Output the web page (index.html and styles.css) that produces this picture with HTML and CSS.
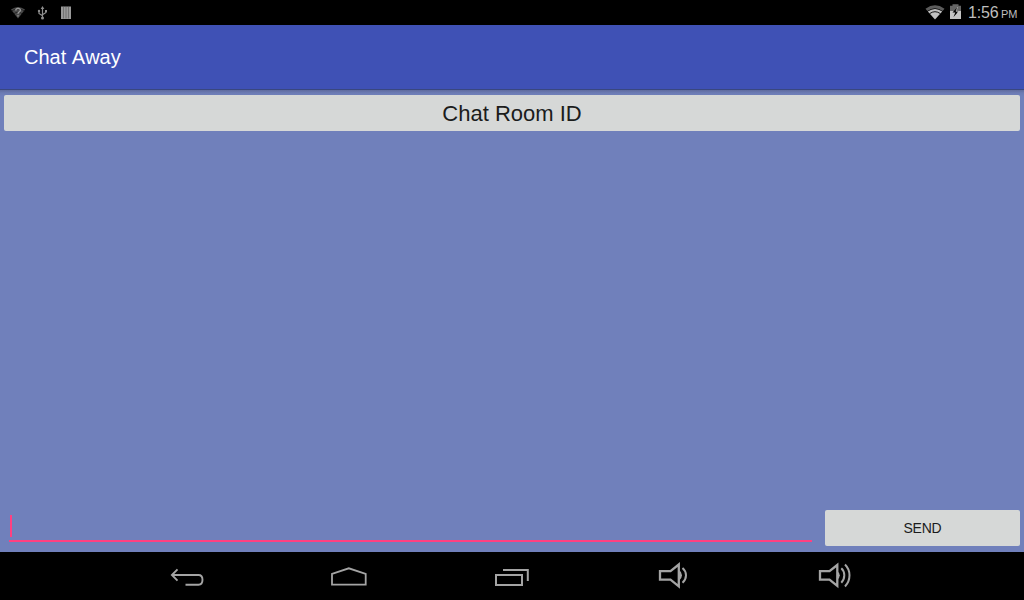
FILE: index.html
```html
<!DOCTYPE html>
<html lang="en">
<head>
<meta charset="utf-8">
<title>Chat Away</title>
<link rel="stylesheet" href="styles.css">
</head>
<body>
<div class="screen">
  <header class="status">
    <div class="notices">
      <svg width="90" height="25" viewBox="0 0 90 25">
        <path d="M11 9.500Q18 4.500 25 9.500L18 18.500Z" fill="#4b4b4b"/>
        <path d="M11.500 11Q18 6.500 24.500 11M13.500 14Q18 10.500 22.500 14" fill="none" stroke="#111" stroke-width=".6"/>
        <path d="M15.800 10.500Q15.800 8.400 18 8.400Q20.400 8.400 20.400 10.300Q20.400 11.300 19 12.200Q18 12.800 18 13.800M18 15.200V16.600" fill="none" stroke="#999" stroke-width="1.400"/>
        <path d="M42.500 8V18M39 11V13.500L42.500 15.800M46 11V12.500L42.500 14.800" fill="none" stroke="#8e8e8e" stroke-width="1.200"/>
        <path d="M42.500 6L44.300 9H40.700Z" fill="#8e8e8e"/>
        <path d="M45 10h2v2h-2z" fill="#8e8e8e"/>
        <circle cx="39" cy="11" r="1.200" fill="#8e8e8e"/>
        <circle cx="42.500" cy="18" r="1.500" fill="#8e8e8e"/>
        <path d="M61 6.500H71V19H61Z" fill="#999"/>
        <path d="M63.500 7V18.500M66 7V18.500M68.500 7V18.500" stroke="#686868" stroke-width=".8"/>
      </svg>
    </div>
    <div class="system">
      <svg width="40" height="25" viewBox="925 0 40 25">
        <path d="M925.500 8.700Q935 1.800 944.500 8.700L942.600 11Q935 5.600 927.400 11Z" fill="#5c5c5c"/>
        <path d="M927.800 11.500Q935 6.400 942.200 11.500L935 19.500Z" fill="#c0c0c0"/>
        <path d="M929.500 13.700Q935 9.700 940.500 13.700" fill="none" stroke="#000" stroke-width=".9"/>
        <path d="M950 5.800H952.500V4.200H958.500V5.800H961V12H950Z" fill="#656565"/>
        <path d="M950 11H961V19H950Z" fill="#c4c4c4"/>
        <path d="M957.600 7L952.500 12.500H955.300L953.500 17L958.800 11.300H956Z" fill="#000"/>
        <path d="M957.600 7L956 11.300H958.800L957 13.300" fill="none" stroke="#eee" stroke-width=".5"/>
      </svg>
      <span class="clock">1:56</span><span class="meridiem">PM</span>
    </div>
  </header>
  <div class="appbar">Chat Away</div>
  <main class="content">
    <button class="btn room">Chat Room ID</button>
    <div class="messages"></div>
    <div class="composer">
      <div class="field"><span class="caret"></span></div>
      <button class="btn send">SEND</button>
    </div>
  </main>
  <nav class="navbar">
    <svg width="60" height="40" viewBox="0 0 60 40"><path d="M12 19H38.500Q42.500 19 42.500 23.800Q42.500 28.700 38.500 28.700H25.500M17.500 13.300L11.900 19L17.500 24.700" stroke-width="1.900"/></svg>
    <svg class="home" width="60" height="40" viewBox="0 0 60 40"><path d="M12 28.700V17.800L28.800 12.300L45.700 17.800V28.700Z" stroke-width="1.800"/></svg>
    <svg width="60" height="40" viewBox="0 0 60 40"><path d="M11 19H37V29H11ZM18 14H42.800V25" stroke-width="2"/></svg>
    <svg width="60" height="40" viewBox="0 0 60 40"><path d="M15 15.200H25.500L33.800 8.500V30.300L25.500 23.700H15Z" stroke-width="2.300"/><path d="M34 14Q37 16 37 19.300Q37 22.600 34 24.800Z" class="solid"/><path d="M37.500 12Q41 15 41 19.300Q41 23.600 37.500 26.800" stroke-width="2"/></svg>
    <svg width="60" height="40" viewBox="0 0 60 40"><path d="M15 15.200H24.500L32.300 9V29.800L24.500 23.700H15Z" stroke-width="2.300"/><path d="M32 15Q34.800 16.700 34.800 19.300Q34.800 22 32 24Z" class="solid"/><path d="M36.300 12.300Q39.300 15 39.300 19.300Q39.300 23.600 36.300 26.700M40 8.500Q44.500 13 44.500 19.300Q44.500 25.700 40 30.500" stroke-width="2"/></svg>
  </nav>
</div>
</body>
</html>
```
FILE: styles.css
```css
* { box-sizing: border-box; }
body { margin: 0; font-family: "Liberation Sans", Arial, sans-serif; }
svg { display: block; }
.screen { width: 1024px; height: 600px; display: flex; flex-direction: column; overflow: hidden; background: #7080bb; }
.status { height: 25px; flex: none; background: #000; display: flex; justify-content: space-between; }
.system { display: flex; align-items: baseline; width: 99px; color: #bebebe; line-height: 26px; white-space: nowrap; }
.system svg { align-self: flex-start; flex: none; }
.clock { font-size: 16px; width: 31px; margin: 0 2px 0 3px; letter-spacing: -.2px; }
.meridiem { font-size: 11px; }
.appbar { height: 64px; flex: none; background: #3f51b5; color: #fff; font-size: 20px; line-height: 64px; padding-left: 24px; font-kerning: none; }
.content { flex: 1; display: flex; flex-direction: column; padding: 6px 4px; background: linear-gradient(#39477f 0, #39477f 1px, #5f6b9e 1px, #6c7bb4 4px, #7080bb 7px); }
.btn { font-family: inherit; border: 0; padding: 0; border-radius: 2px; background: #d6d8d7; color: #1b1c1c; height: 36px; display: block; }
.room { font-size: 22px; line-height: 36px; padding-top: 1px; }
.messages { flex: 1; }
.composer { display: flex; height: 36px; gap: 13px; }
.field { flex: 1; margin: 5px 0 4px 5px; border-bottom: 2px solid #ff4081; }
.caret { display: block; width: 2px; height: 22px; margin-left: 1px; background: #ff4081; }
.send { width: 195px; font-size: 14px; line-height: 36px; letter-spacing: -.2px; }
.navbar { height: 48px; flex: none; background: #000; display: flex; align-items: center; gap: 100px; padding-left: 160px; }
.navbar svg { flex: none; fill: none; stroke: #a4a4a4; }
.navbar .home { margin-right: 5px; }
.navbar .solid { fill: #a4a4a4; stroke: none; }
```
